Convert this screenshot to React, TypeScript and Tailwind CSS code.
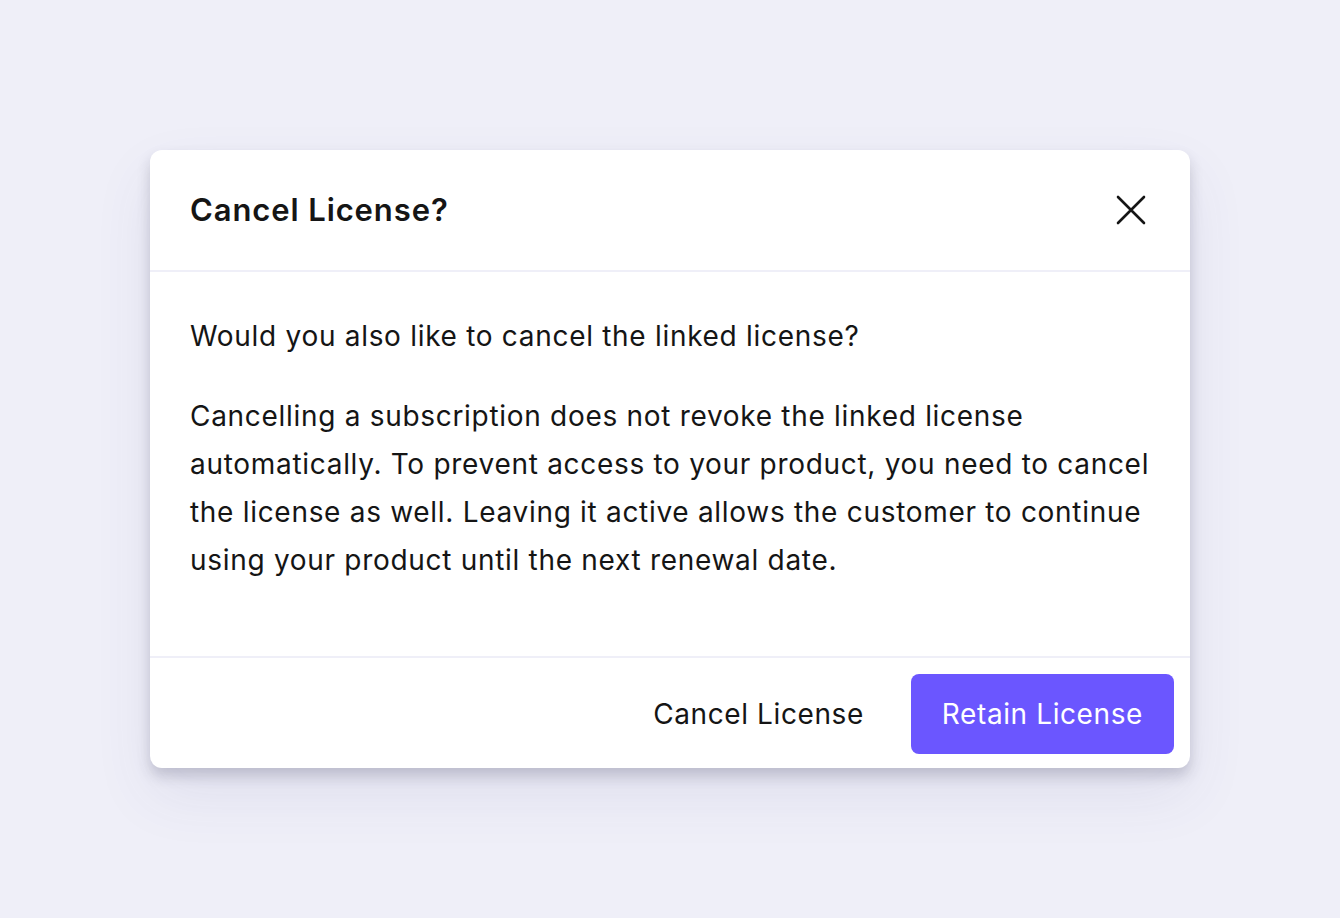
const FONT = "font-['Inter','Liberation_Sans',sans-serif]";

function CloseIcon() {
  return (
    <svg width="30" height="30" viewBox="0 0 30 30" fill="none" stroke="currentColor" strokeWidth="2.6" strokeLinecap="round">
      <path d="M2 2 L28 28 M28 2 L2 28" />
    </svg>
  );
}

export default function App() {
  return (
    <div className={`min-h-[918px] w-full bg-[#efeff8] pt-[150px] ${FONT}`}>
      <div className="mx-auto w-[1040px] rounded-xl bg-white shadow-[0_8px_14px_rgba(40,40,70,0.2),0_26px_60px_rgba(70,70,130,0.09)]">
        {/* header */}
        <div className="flex h-[122px] items-center justify-between border-b-2 border-[#efeff8] pl-10 pr-[44px]">
          <h2 className="text-[31px] font-[580] tracking-[0.9px] text-[#151515]">Cancel License?</h2>
          <button className="flex items-center justify-center text-[#151515]">
            <CloseIcon />
          </button>
        </div>

        {/* body */}
        <div className="px-10 pb-[72px] pt-10 text-[28px] leading-[48px] tracking-[0.7px] text-[#151515]">
          <p>Would you also like to cancel the linked license?</p>
          <p className="mt-8">
            Cancelling a subscription does not revoke the linked license automatically. To prevent access to your
            product, you need to cancel the license as well. Leaving it active allows the customer to continue using
            your product until the next renewal date.
          </p>
        </div>

        {/* footer */}
        <div className="flex items-center justify-end gap-4 border-t-2 border-[#efeff8] pb-[14px] pr-4 pt-4 text-[28px] tracking-[0.6px]">
          <button className="h-20 px-[31px] text-[#151515]">Cancel License</button>
          <button className="h-20 rounded-lg bg-[#6b56ff] px-[31px] text-white">Retain License</button>
        </div>
      </div>
    </div>
  );
}
